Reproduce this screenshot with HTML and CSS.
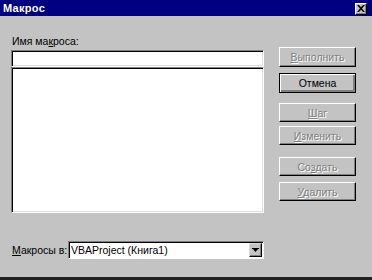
FILE: index.html
```html
<!DOCTYPE html>
<html lang="ru">
<head>
<meta charset="utf-8">
<title>Макрос</title>
<link rel="stylesheet" href="styles.css">
</head>
<body>
<div class="dialog">
  <div class="titlebar">
    <span class="title">Макрос</span>
    <span class="close">
      <svg width="8" height="7" viewBox="0 0 8 7"><path d="M0 0h2l2 2.2L6 0h2L5 3.5 8 7H6L4 4.8 2 7H0l3-3.5z" fill="#000"/></svg>
    </span>
  </div>
  <div class="content">
    <div class="left">
      <div class="label">Имя ма<u>к</u>роса:</div>
      <div class="field input"></div>
      <div class="field list"></div>
      <div class="combo-row">
        <span class="label small"><u>М</u>акросы в:</span>
        <div class="combo">
          <span class="combo-text">VBAProject (Книга1)</span>
          <span class="combo-btn"><svg width="7" height="4" viewBox="0 0 7 4"><path d="M0 0h7v1H6L3.5 4 1 1H0z" fill="#000"/></svg></span>
        </div>
      </div>
    </div>
    <div class="right">
      <div class="btn disabled b-run"><span><u>В</u>ыполнить</span></div>
      <div class="btn default b-cancel"><span>Отмена</span></div>
      <div class="btn disabled b-step"><span><u>Ш</u>аг</span></div>
      <div class="btn disabled b-edit"><span><u>И</u>зменить</span></div>
      <div class="btn disabled b-create"><span>Со<u>з</u>дать</span></div>
      <div class="btn disabled b-del"><span><u>У</u>далить</span></div>
    </div>
  </div>
</div>
</body>
</html>
```
FILE: styles.css
```css
html, body {
  margin: 0;
  padding: 0;
  background: #c0c0c0;
}
.dialog {
  width: 372px;
  height: 280px;
  box-sizing: border-box;
  background: #c3c3c3;
  border-bottom: 3px solid #202020;
  font-family: "Liberation Sans", Arial, sans-serif;
  font-size: 11px;
  color: #000;
  display: flex;
  flex-direction: column;
  overflow: hidden;
}
.titlebar {
  height: 16px;
  flex: none;
  background: #000080;
  display: flex;
  align-items: center;
  justify-content: space-between;
  padding: 0 5px 0 3px;
}
.title {
  color: #fff;
  font-weight: bold;
  font-size: 11px;
  letter-spacing: 0.3px;
}
.close {
  width: 12px;
  height: 12px;
  margin-top: 1px;
  box-sizing: border-box;
  background: #c3c3c3;
  border-top: 1px solid #fff;
  border-left: 1px solid #fff;
  border-right: 1px solid #000;
  border-bottom: 1px solid #000;
  box-shadow: inset -1px -1px 0 #808080;
  display: flex;
  align-items: center;
  justify-content: center;
}
.content {
  display: flex;
  padding-left: 11px;
}
.left {
  width: 253px;
  display: flex;
  flex-direction: column;
}
.label {
  margin-top: 19px;
  height: 15px;
  line-height: 13px;
  padding-left: 1px;
  font-size: 10.5px;
}
.field {
  box-sizing: border-box;
  background: #fff;
  border-top: 1px solid #808080;
  border-left: 1px solid #808080;
  border-right: 1px solid #fff;
  border-bottom: 1px solid #fff;
  box-shadow: inset 1px 1px 0 #000, inset -1px -1px 0 #dcdcdc;
}
.input {
  height: 17px;
}
.list {
  height: 146px;
}
.combo-row {
  margin-top: 28px;
  display: flex;
  align-items: center;
  height: 18px;
}
.label.small {
  margin-top: 0;
  height: auto;
  width: 56px;
  flex: none;
}
.combo {
  flex: 1;
  height: 18px;
  box-sizing: border-box;
  background: #fff;
  border-top: 1px solid #808080;
  border-left: 1px solid #808080;
  border-right: 1px solid #fff;
  border-bottom: 1px solid #fff;
  box-shadow: inset 1px 1px 0 #000;
  display: flex;
  align-items: center;
  padding: 0 1px 0 2px;
}
.combo-text {
  flex: 1;
  font-size: 10.5px;
  line-height: 12px;
}
.combo-btn {
  width: 13px;
  height: 14px;
  box-sizing: border-box;
  background: #c3c3c3;
  border-top: 1px solid #dcdcdc;
  border-left: 1px solid #dcdcdc;
  border-right: 1px solid #000;
  border-bottom: 1px solid #000;
  box-shadow: inset -1px -1px 0 #808080;
  display: flex;
  align-items: center;
  justify-content: center;
}
.right {
  margin-left: 15px;
  width: 77px;
  display: flex;
  flex-direction: column;
}
.btn {
  height: 20px;
  box-sizing: border-box;
  background: #c3c3c3;
  border-top: 1px solid #fff;
  border-left: 1px solid #fff;
  border-right: 1px solid #000;
  border-bottom: 1px solid #000;
  box-shadow: inset -1px -1px 0 #808080;
  display: flex;
  align-items: center;
  justify-content: center;
  font-size: 10.5px;
}
.btn.default {
  border: 1px solid #000;
  box-shadow: inset 1px 1px 0 #fff, inset -2px -2px 0 #808080;
}
.btn.disabled span {
  color: #808080;
  text-shadow: 1px 1px 0 #fff;
}
.b-run { margin-top: 31px; }
.b-cancel { margin-top: 6px; }
.b-step { margin-top: 10px; height: 19px; }
.b-edit { margin-top: 4px; height: 19px; }
.b-create { margin-top: 12px; height: 19px; }
.b-del { margin-top: 6px; height: 19px; }
```
